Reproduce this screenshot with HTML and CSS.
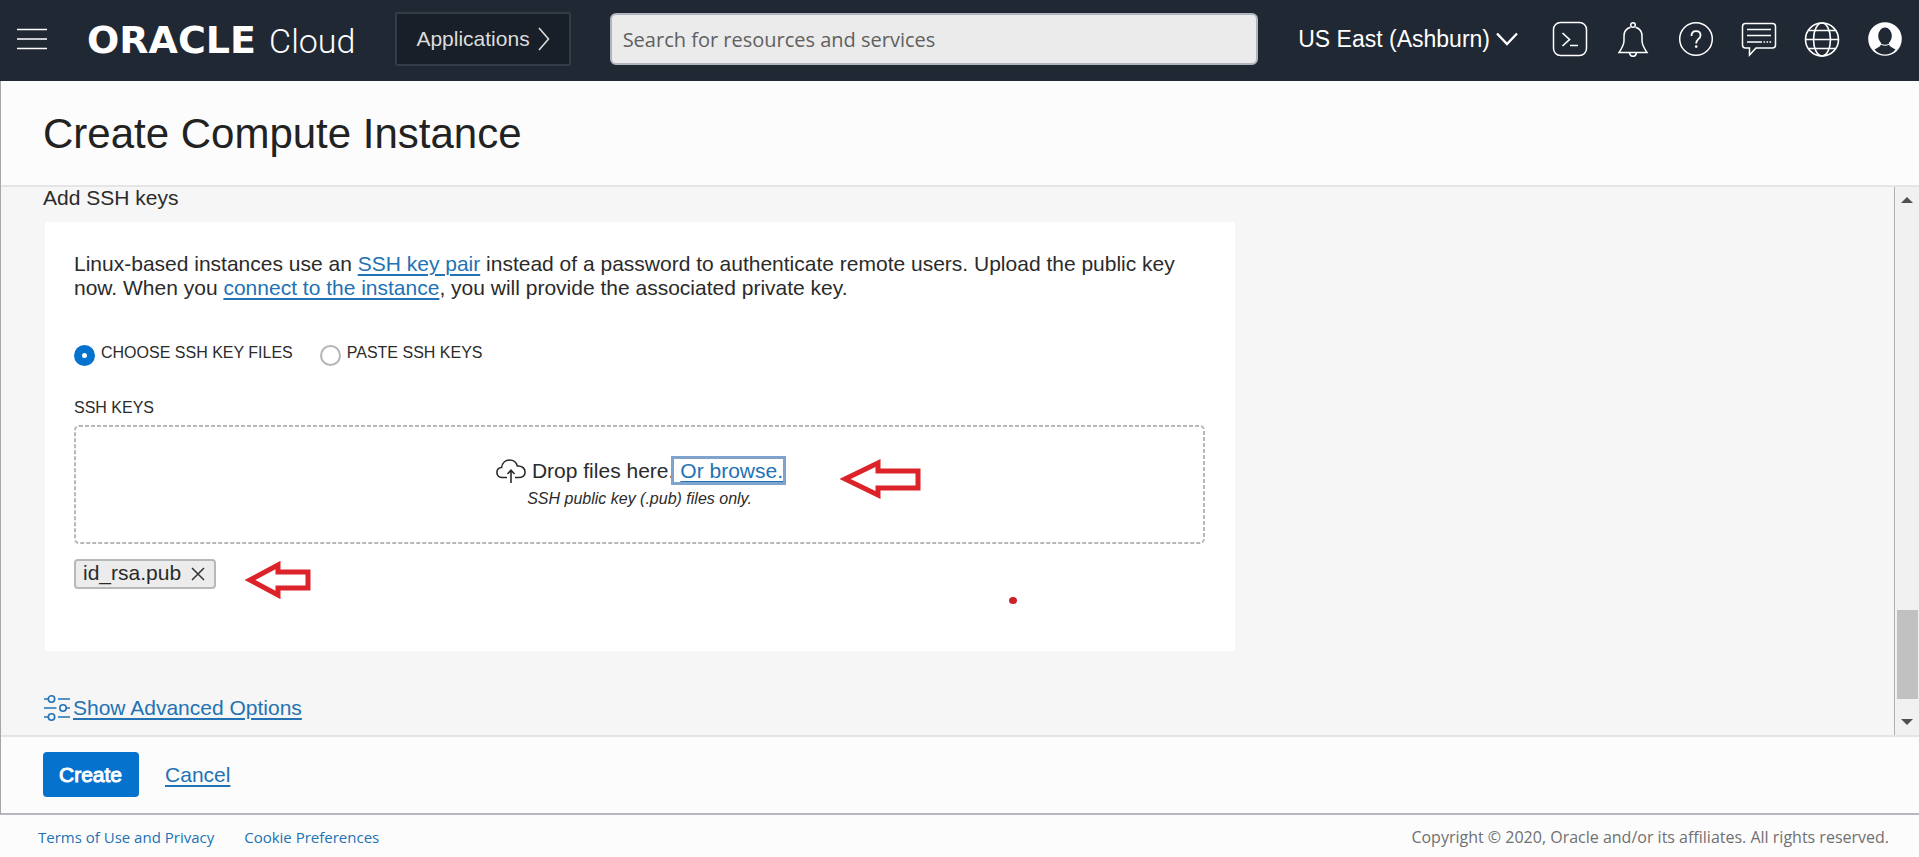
FILE: index.html
```html
<!DOCTYPE html>
<html lang="en">
<head>
<meta charset="utf-8">
<title>Create Compute Instance - Oracle Cloud</title>
<link rel="stylesheet" href="styles.css">
</head>
<body>
<header class="topbar">
  <button class="icon-button menu-button" type="button" aria-label="Open navigation menu">
    <svg width="30" height="22" viewBox="0 0 30 22"><path d="M0 1.5h30M0 20.5h30" stroke="#fff" stroke-width="1.4"/><path d="M0 11h30" stroke="#c8ccd2" stroke-width="2"/></svg>
  </button>
  <a class="brand" href="#"><span class="brand-name">ORACLE</span><span class="brand-product">Cloud</span></a>
  <button class="apps-button" type="button">Applications
    <svg width="12" height="24" viewBox="0 0 12 24" fill="none" stroke="#dcdcdc" stroke-width="1.6"><path d="M1 1l9.500 11L1 23"/></svg>
  </button>
  <input class="search" type="search" placeholder="Search for resources and services" aria-label="Search for resources and services">
  <button class="region" type="button">US East (Ashburn)
    <svg width="22" height="14" viewBox="0 0 22 14" fill="none" stroke="#fff" stroke-width="2.400"><path d="M1 1.500l10 10.500L21 1.500"/></svg>
  </button>
  <nav class="tools" aria-label="Tools">
    <button class="icon-button" type="button" aria-label="Cloud Shell">
      <svg width="36" height="36" viewBox="0 0 36 36" fill="none" stroke="#fff" stroke-width="1.500"><rect x="1.500" y="1.500" width="33" height="33" rx="7"/><path d="M10.500 12l7 6.500-7 6.500M18 24.500h8" stroke-width="1.700"/></svg>
    </button>
    <button class="icon-button" type="button" aria-label="Notifications">
      <svg width="36" height="36" viewBox="0 0 36 36" fill="none" stroke="#fff" stroke-width="1.500"><circle cx="18" cy="4" r="2.300"/><path d="M15.500 6.200C11 7.500 9 11 9 15v4.500c0 5-2.500 8-5 12h28c-2.500-4-5-7-5-12V15c0-4-2-7.500-6.500-8.800"/><path d="M14.500 32c.5 2.200 1.800 3.300 3.500 3.300s3-1.100 3.500-3.300"/></svg>
    </button>
    <button class="icon-button" type="button" aria-label="Help">
      <svg width="36" height="36" viewBox="0 0 36 36" fill="none" stroke="#fff" stroke-width="1.500"><circle cx="18" cy="18" r="16.300"/><path d="M13.500 15c0-3 1.800-4.800 4.500-4.800s4.500 1.600 4.500 4.200c0 3.600-4.300 3.600-4.300 8" stroke-width="1.800"/><circle cx="18.200" cy="25.600" r="1.300" fill="#fff" stroke="none"/></svg>
    </button>
    <button class="icon-button" type="button" aria-label="Chat">
      <svg width="36" height="36" viewBox="0 0 36 36" fill="none" stroke="#fff" stroke-width="1.500"><path d="M4.500 2.500h27c2 0 3 1 3 3v18.500c0 2-1 3-3 3H15L8.500 34v-7h-4c-2 0-3-1-3-3V5.500c0-2 1-3 3-3z"/><path d="M6 8.500h24M6 14.500h24M6 21h15"/><path d="M22.500 21h8" stroke-dasharray="1.600 1.400"/></svg>
    </button>
    <button class="icon-button" type="button" aria-label="Language">
      <svg width="36" height="36" viewBox="0 0 36 36" fill="none" stroke="#fff" stroke-width="1.600"><circle cx="18" cy="18.500" r="16.500"/><ellipse cx="18" cy="18.500" rx="8.500" ry="16.500"/><path d="M4.500 9.500h27M1.500 18.500h33M4.500 27.500h27"/></svg>
    </button>
    <button class="icon-button" type="button" aria-label="Profile">
      <svg width="36" height="36" viewBox="0 0 36 36"><circle cx="18" cy="18" r="16.800" fill="#fff"/><ellipse cx="18" cy="15" rx="6.800" ry="8.500" fill="#1f2833"/><path d="M14 21.500h8v1.500c0 2 2.500 3.500 6.500 5.500C26 31.800 22 33.600 18 33.600S10 31.800 7.500 28.500C11.500 26.500 14 25 14 23z" fill="#1f2833"/><path d="M14 23.200c2.600 1.400 5.400 1.400 8 0" fill="none" stroke="#fff" stroke-width="1"/></svg>
    </button>
  </nav>
</header>

<main class="dialog">
  <div class="title-bar"><h1>Create Compute Instance</h1></div>
  <div class="scroll-area">
    <div class="content">
      <h2>Add SSH keys</h2>
      <section class="panel">
        <p class="intro">Linux-based instances use an <a href="#">SSH key pair</a> instead of a password to authenticate remote users. Upload the public key now. When you <a href="#">connect to the instance</a>, you will provide the associated private key.</p>
        <div class="choices" role="radiogroup" aria-label="SSH key source">
          <div class="choice"><input type="radio" name="source" id="source-file" checked><label for="source-file">CHOOSE SSH KEY FILES</label></div>
          <div class="choice"><input type="radio" name="source" id="source-paste"><label for="source-paste">PASTE SSH KEYS</label></div>
        </div>
        <div class="field-label">SSH KEYS</div>
        <div class="dropzone">
          <svg class="dropzone-outline" aria-hidden="true"><rect x="1" y="1" rx="4"/></svg>
          <div class="drop-line">
            <svg width="30" height="24" viewBox="0 0 30 24" fill="none" stroke="#2b2b2b" stroke-width="1.600"><path d="M11 18.500H6.500c-3.300 0-5.600-2-5.600-5 0-2.800 1.900-4.800 4.700-5C6.200 4 9.400 1 13.500 1c4 0 6.800 2.300 7.900 6 4.400-.3 7.700 2.300 7.700 6 0 3.400-2.600 5.500-6.300 5.500H19"/><path d="M15 24V11.500M11.500 15l3.500-3.800 3.500 3.800"/></svg>
            <span>Drop files here.<a class="browse" href="#">Or browse.</a></span>
          </div>
          <em class="hint">SSH public key (.pub) files only.</em>
        </div>
        <div class="chip">id_rsa.pub
          <button class="icon-button" type="button" aria-label="Remove id_rsa.pub"><svg width="14" height="18" viewBox="0 0 14 18" stroke="#333" stroke-width="1.500"><path d="M1 4l12 12M13 4L1 16"/></svg></button>
        </div>
        <svg class="mark mark-browse" width="82" height="42" viewBox="0 0 82 42" aria-hidden="true"><path d="M5 21L38 5v8h40v17H38v7z"/></svg>
        <svg class="mark mark-file" width="68" height="38" viewBox="0 0 68 38" aria-hidden="true"><path d="M5 19L33 4v7h30v16H33v7z"/></svg>
        <span class="mark mark-dot"></span>
      </section>
      <a class="advanced" href="#">
        <svg width="26" height="26" viewBox="0 0 26 26" fill="none" stroke="#2272b4" stroke-width="1.600"><circle cx="7.500" cy="4" r="3.200"/><circle cx="19" cy="13" r="3.200"/><circle cx="7.500" cy="22" r="3.200"/><path d="M0 4h4M14 4h12M0 13h12.500M22.500 13H26M0 22h4M14 22h12"/></svg>
        <span>Show Advanced Options</span>
      </a>
    </div>
    <div class="scrollbar" aria-hidden="true">
      <svg width="12" height="6" viewBox="0 0 12 6"><path d="M0 6l6-6 6 6z" fill="#505050"/></svg>
      <div class="track"><div class="thumb"></div></div>
      <svg width="12" height="6" viewBox="0 0 12 6"><path d="M0 0h12L6 6z" fill="#505050"/></svg>
    </div>
  </div>
  <div class="actions">
    <button class="primary" type="button">Create</button>
    <a href="#">Cancel</a>
  </div>
</main>

<footer class="footer">
  <a href="#">Terms of Use and Privacy</a>
  <a href="#">Cookie Preferences</a>
  <span class="copyright">Copyright © 2020, Oracle and/or its affiliates. All rights reserved.</span>
</footer>
</body>
</html>
```
FILE: styles.css
```css
* { box-sizing: border-box; }

body {
  margin: 0;
  min-height: 100vh;
  display: flex;
  flex-direction: column;
  background: #fcfcfc;
  color: #2b2b2b;
  font: 21px/24px "Liberation Sans", Arial, sans-serif;
}

button, input { font: inherit; margin: 0; }
svg { display: block; flex: none; }
a { color: #2272b4; text-decoration-thickness: 2px; text-underline-offset: 3px; }
h1, h2, p { margin: 0; font-weight: normal; }

.icon-button {
  display: flex;
  padding: 0;
  border: 0;
  background: none;
}

/* Top bar */
.topbar {
  display: flex;
  align-items: center;
  height: 81px;
  padding: 0 16px 3px;
  background: #1f2833;
  color: #fff;
}
.menu-button { margin-left: 1px; }

.brand {
  display: flex;
  align-items: baseline;
  gap: 13px;
  margin: 2px 40px 0;
  color: #fff;
  text-decoration: none;
  line-height: 40px;
}
.brand-name { font-family: "DejaVu Sans", sans-serif; font-size: 38px; font-weight: bold; }
.brand-product { font-family: Roboto, sans-serif; font-size: 34px; font-weight: 300; }

.apps-button {
  display: flex;
  align-items: center;
  gap: 8px;
  height: 54px;
  padding: 0 19px;
  border: 2px solid #333d47;
  border-radius: 2px;
  background: #191f28;
  color: #dcdcdc;
  white-space: nowrap;
}

.search {
  flex: 0 1 648px;
  min-width: 0;
  height: 52px;
  margin: 0 40px 0 39px;
  padding: 0 11px;
  border: 2px solid #b0b5bd;
  border-radius: 6px;
  background: #ebebeb;
  font-family: "Open Sans", "Noto Sans", sans-serif;
  font-size: 20px;
}
.search::placeholder { color: #606060; opacity: 1; }

.region {
  display: flex;
  align-items: center;
  gap: 6px;
  margin-left: auto;
  padding: 0;
  border: 0;
  background: none;
  color: #fff;
  font-size: 23px;
  white-space: nowrap;
}

.tools { display: flex; gap: 27px; margin-left: 34px; }

/* Dialog */
.dialog {
  flex: 1;
  display: flex;
  flex-direction: column;
  border-left: 1px solid #a5a7aa;
  border-bottom: 2px solid #b5b8bd;
}

.title-bar {
  padding: 29px 42px 27px;
  border-bottom: 2px solid #e5e5e5;
}
h1 { font-size: 42px; line-height: 48px; color: #222; }

.scroll-area {
  flex: 1;
  display: flex;
  background: #f6f6f6;
}

.content { flex: 1; padding: 0 42px 8px; }
h2 { font-size: 21px; line-height: 22px; }

.panel {
  position: relative;
  max-width: 1190px;
  margin: 13px 0 0 2px;
  padding: 30px 30px 62px 29px;
  border-radius: 2px;
  background: #fff;
}

.choices {
  display: flex;
  gap: 27px;
  margin-top: 43px;
  font-size: 16px;
  line-height: 20px;
}
.choice { display: flex; gap: 6px; }
.choice input {
  appearance: none;
  width: 21px;
  height: 21px;
  margin-top: 2px;
  border: 2px solid #b5b5b8;
  border-radius: 50%;
  background: #fff;
}
.choice input:checked { border: 8px solid #0572ce; }

.field-label { margin: 32px 0 7px; font-size: 16px; line-height: 20px; }

.dropzone {
  position: relative;
  display: flex;
  flex-direction: column;
  align-items: center;
  gap: 6px;
  padding: 34px 0 35px;
}
.dropzone-outline { position: absolute; inset: 0; width: 100%; height: 100%; }
.dropzone-outline rect {
  width: calc(100% - 2px);
  height: calc(100% - 2px);
  fill: none;
  stroke: #b8b8b8;
  stroke-width: 2;
  stroke-dasharray: 4 2;
}
.drop-line { display: flex; align-items: center; gap: 6px; position: relative; }
.browse { padding-left: 6px; outline: 3px solid #7fa3cc; }
.hint { position: relative; font-size: 16px; line-height: 20px; }

.chip {
  display: flex;
  align-items: center;
  gap: 10px;
  width: max-content;
  margin-top: 15px;
  padding: 0 9px 2px 7px;
  border: 2px solid #b5b9bc;
  border-radius: 4px;
  background: #ececec;
}

/* Hand-drawn pointers laid over the panel */
.mark { position: absolute; fill: none; stroke: #dc2329; stroke-width: 5; }
.mark-browse { left: 795px; top: 236px; }
.mark-file { left: 200px; top: 339px; }
.mark-dot { left: 964px; top: 375px; width: 8px; height: 7px; border-radius: 50%; background: #cc2229; }

.advanced {
  display: flex;
  align-items: center;
  gap: 3px;
  width: max-content;
  margin: 44px 0 0 1px;
  text-decoration: none;
}
.advanced span { text-decoration: underline 2px; }

.scrollbar {
  display: flex;
  flex-direction: column;
  align-items: center;
  width: 25px;
  padding: 10px 0;
  border-left: 1px solid #b0b0b0;
  background: #f1f1f1;
}
.track {
  flex: 1;
  display: flex;
  flex-direction: column;
  justify-content: flex-end;
  align-self: stretch;
  padding: 0 1px 20px 2px;
}
.thumb { height: 18%; background: #c1c1c1; }

.actions {
  display: flex;
  align-items: center;
  gap: 26px;
  padding: 15px 42px 16px;
  border-top: 2px solid #e3e4e5;
}
.primary {
  height: 45px;
  padding: 0 17px 0 16px;
  border: 0;
  border-radius: 4px;
  background: #0572ce;
  color: #fff;
  -webkit-text-stroke: 1px #fff;
}

/* Footer */
.footer {
  display: flex;
  gap: 30px;
  padding: 10px 30px 8px 38px;
  font: 16px/24px "Open Sans", "Noto Sans", sans-serif;
}
.footer a { font-size: 15px; text-decoration: none; }
.copyright { margin-left: auto; color: #707070; }
```
